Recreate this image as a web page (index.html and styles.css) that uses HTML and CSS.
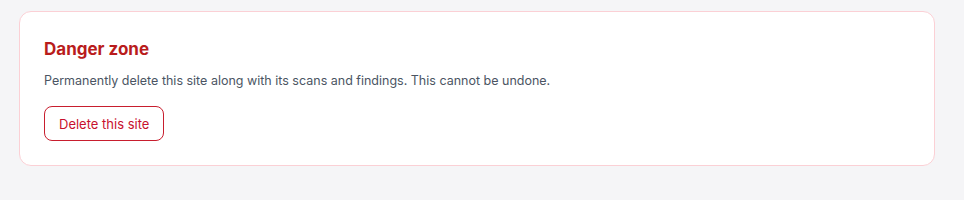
FILE: index.html
```html
<!DOCTYPE html>
<html lang="en">
<head>
    <meta charset="UTF-8">
    <meta name="viewport" content="width=device-width, initial-scale=1.0">
    <title>Site settings</title>
    <link rel="stylesheet" href="styles.css">
</head>
<body>
    <div class="page">
        <!-- danger zone -->
        <section class="danger-card">
            <h2 class="danger-title">Danger zone</h2>
            <p class="danger-text">Permanently delete this site along with its scans and findings. This cannot be undone.</p>
            <button class="btn-danger">Delete this site</button>
        </section>
    </div>
</body>
</html>
```

FILE: styles.css
```css
body {
    margin: 0;
    background-color: #f5f5f7;
    font-family: Inter, "Noto Sans", Arial, sans-serif;
    color: #1f2937;
}

.page {
    padding: 11px 29px 0 19px;
}

.danger-card {
    background-color: #fff;
    border: 1px solid #fbd0d5;
    border-radius: 12px;
    padding: 25px 24px 24px;
}

.danger-title {
    margin: 0 0 9px;
    font-size: 17px;
    line-height: 25px;
    font-weight: 700;
    color: #b91c1c;
}

.danger-text {
    margin: 0 0 15px;
    font-size: 12.5px;
    line-height: 20px;
    color: #4b5563;
}

.btn-danger {
    display: inline-block;
    height: 35px;
    padding: 0 14px;
    background-color: #fff;
    border: 1px solid #c81e2e;
    border-radius: 8px;
    color: #c8102e;
    font-family: inherit;
    font-size: 13px;
    cursor: pointer;
}

.btn-danger:hover {
    background-color: #fef2f2;
}
```
